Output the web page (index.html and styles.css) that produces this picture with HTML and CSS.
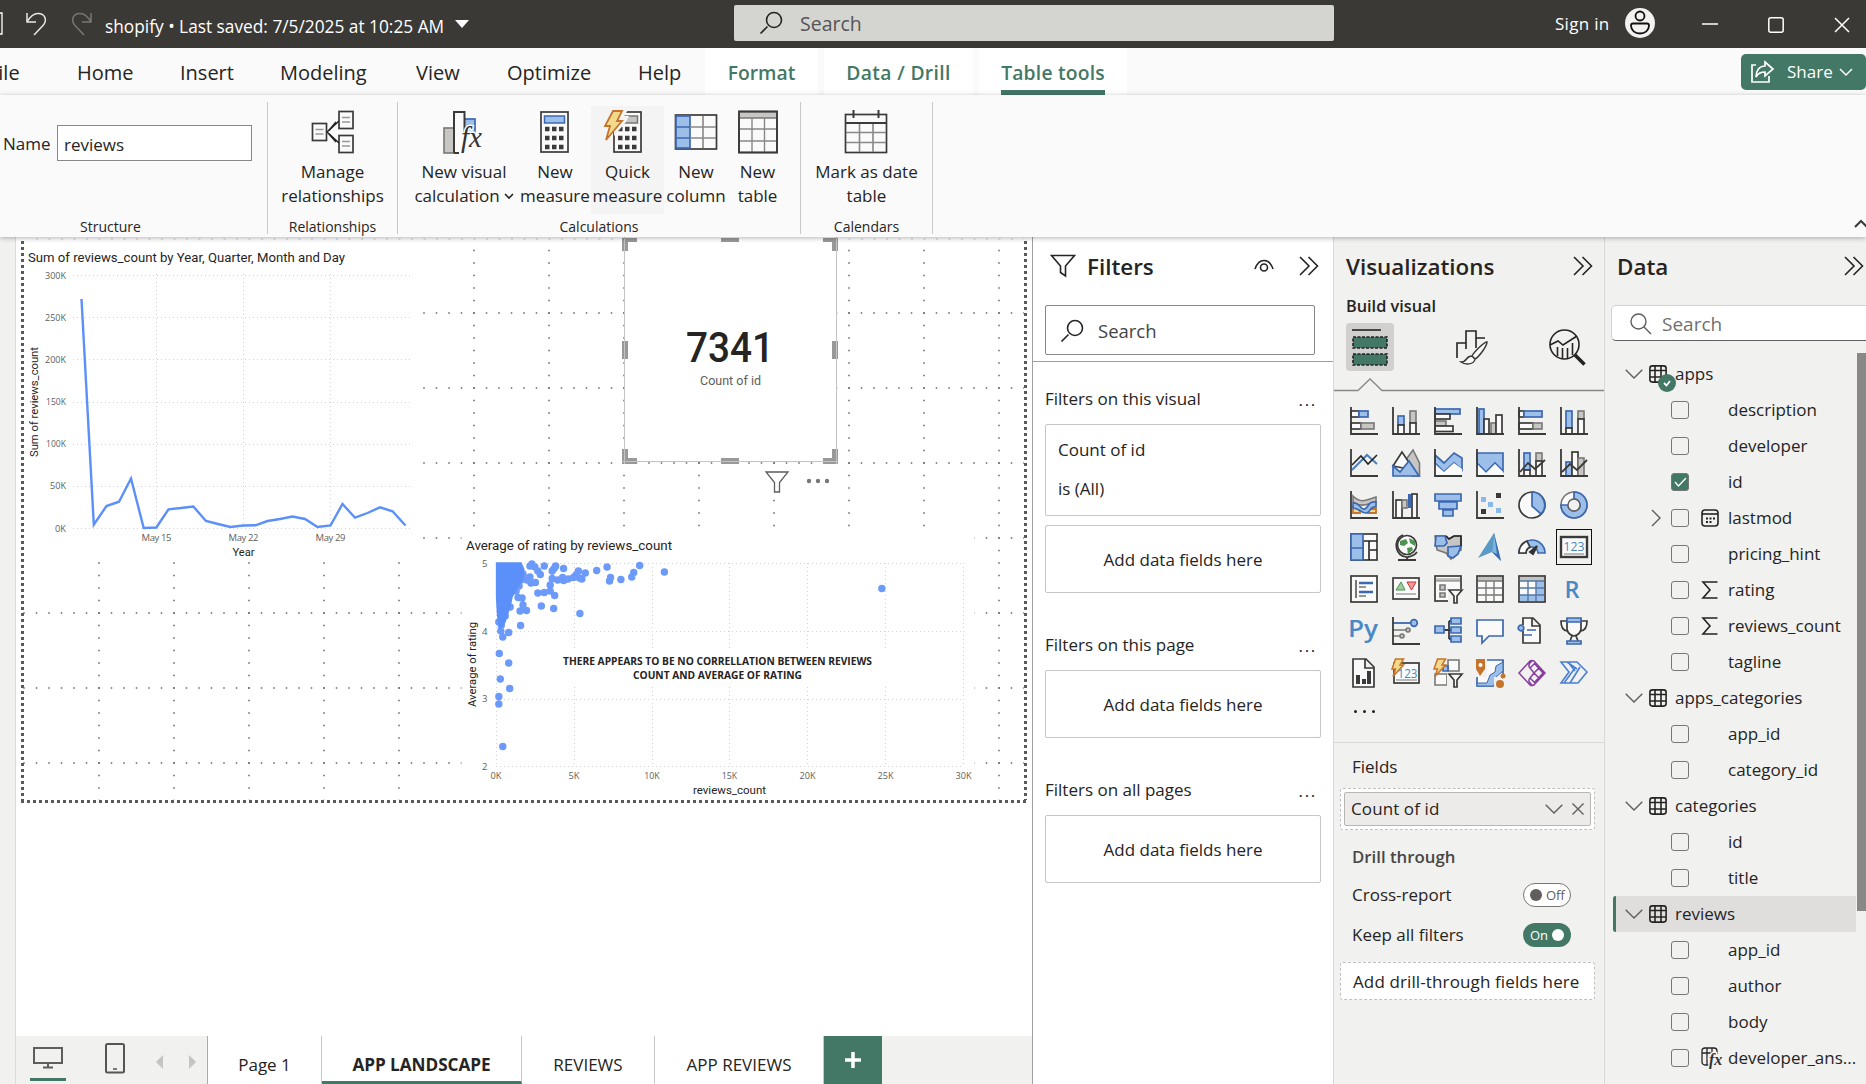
FILE: index.html
```html
<!DOCTYPE html>
<html lang="en">
<head>
<meta charset="utf-8">
<title>shopify</title>
<link rel="stylesheet" href="styles.css">
</head>
<body>
<svg class="defs" width="0" height="0">
  <defs>
    <symbol id="chev" viewBox="0 0 18 10"><path d="M.7.7 9 9 17.300.7" class="ln"/></symbol>
    <symbol id="dbl" viewBox="0 0 20 20"><path d="M1 1l9 9-9 9M9.500 1l9 9-9 9" class="ln dark"/></symbol>
    <symbol id="mag" viewBox="0 0 24 24"><path d="M8.500 15.500L1.500 22.500M15 1.500a7.500 7.500 0 1 1 0 15a7.500 7.500 0 1 1 0-15" class="ln d2"/></symbol>
    <symbol id="tbl" viewBox="0 0 18 18"><rect x=".9" y=".9" width="16.200" height="16.200" rx="2.500" class="ln d2"/><path d="M1 5.500h16M1 12h16M6 1v16M12 1v16" class="ln d2"/></symbol>
    <symbol id="sum" viewBox="0 0 18 18"><path d="M16.500 1H2l7 8-7 8h14.500" class="ln d2"/></symbol>
    <symbol id="funnel" viewBox="0 0 26 26"><path d="M1.500 2.500h23l-9 10.500v10l-5-3.500V13z" class="ln d2"/></symbol>
    <symbol id="bolt" viewBox="0 0 14 20"><path d="M5 1h8L9.500 7H13L2.500 18.500 5 11H1.500z" fill="#f3d98b" stroke="#c4742c" stroke-width="1.500"/></symbol>
    <symbol id="calc" viewBox="0 0 30 42"><rect x="1" y="1" width="27" height="40" class="w"/><rect x="4.500" y="5" width="20" height="7" class="top"/><path d="M5 18h4.500M12 18h4.500M19 18h4.500M5 27h4.500M12 27h4.500M19 27h4.500M5 36h4.500M12 36h4.500M19 36h4.500" stroke="#3b3a39" stroke-width="4.500"/></symbol>
  </defs>
</svg>

<header class="titlebar">
  <div class="tb-left">
    <svg class="save" width="3" height="24"><path d="M0 1h2v21H0" fill="none" stroke="#fff" stroke-width="1.300"/></svg>
    <svg class="undo" width="22" height="24" viewBox="0 0 22 24"><path d="M1 1v9h9M1 10C5 3 9 1 13 1.500c7 1 8 7.500 4 12L8 23" fill="none" stroke="#e8e8e8" stroke-width="1.500"/></svg>
    <svg class="redo" width="22" height="24" viewBox="0 0 22 24"><path d="M21 1v9h-9M21 10C17 3 13 1 9 1.500c-7 1-8 7.500-4 12L14 23" fill="none" stroke="#797775" stroke-width="1.500"/></svg>
    <span class="doc">shopify&nbsp;•&nbsp;Last saved: 7/5/2025 at 10:25 AM</span>
    <svg class="drop" width="14" height="8"><path d="M0 0h14L7 8z" fill="#fff"/></svg>
  </div>
  <div class="tb-search"><svg width="24" height="24"><use href="#mag"/></svg><span>Search</span></div>
  <div class="tb-right">
    <span class="signin">Sign in</span>
    <svg width="30" height="30" viewBox="0 0 30 30"><circle cx="15" cy="15" r="15" fill="#f3f2f1"/><circle cx="15" cy="8" r="4.500" fill="none" stroke="#111" stroke-width="1.800"/><path d="M8 15.500h14a2 2 0 0 1 2 2c0 5-4 8-9 8s-9-3-9-8a2 2 0 0 1 2-2z" fill="none" stroke="#111" stroke-width="1.800"/></svg>
    <svg class="min" width="16" height="16"><path d="M0 8h16" stroke="#fff" stroke-width="1.500"/></svg>
    <svg class="max" width="16" height="16"><rect x=".8" y=".8" width="14.400" height="14.400" rx="2" fill="none" stroke="#fff" stroke-width="1.500"/></svg>
    <svg class="cls" width="16" height="16"><path d="M1 1l14 14M15 1L1 15" stroke="#fff" stroke-width="1.500"/></svg>
  </div>
</header>

<nav class="tabs">
  <span class="tab t-file">File</span><span class="tab t-home">Home</span><span class="tab t-insert">Insert</span><span class="tab t-model">Modeling</span><span class="tab t-view">View</span><span class="tab t-opt">Optimize</span><span class="tab t-help">Help</span>
  <span class="ctx c-format">Format</span><span class="ctx c-data">Data / Drill</span><span class="ctx c-table"><b>Table tools</b></span>
  <button class="share"><svg width="24" height="24" viewBox="0 0 24 24"><path d="M5 5H1v17h17v-6M14 2l8 7-8 7v-4c-4 0-7 1-9 5 0-6 3-11 9-11z" fill="none" stroke="#fff" stroke-width="1.700"/></svg>Share<svg width="14" height="9"><path d="M1 1l6 6 6-6" fill="none" stroke="#fff" stroke-width="1.500"/></svg></button>
</nav>

<section class="ribbon">
  <div class="group g-structure">
    <div class="tools name"><label>Name</label><div class="input">reviews</div></div>
    <div class="caption">Structure</div>
  </div>
  <div class="group g-rel">
    <div class="tools"><div class="tool">
      <svg width="44" height="44" viewBox="0 0 44 44"><path d="M18 20.500L25 12M18 24l7 8" class="ln d2"/><rect x="1.500" y="13.500" width="14" height="17" class="w"/><rect x="22" y="1.500" width="14" height="17" class="w" transform="translate(6)"/><rect x="28" y="25.500" width="14" height="17" class="w"/><path d="M4.500 19.500h8M4.500 24h8M31 7.500h8M31 12h8M31 31.500h8M31 36h8" stroke="#999" stroke-width="1.500"/><path d="M16 22l12-11M16 22l12 11" class="ln d2"/></svg>
      <span>Manage<br>relationships</span></div></div>
    <div class="caption">Relationships</div>
  </div>
  <div class="group g-calc">
    <div class="tools">
      <div class="tool w-visual"><svg width="44" height="44" viewBox="0 0 44 44"><rect x="2" y="18" width="10" height="25" class="g"/><rect x="22" y="9" width="11" height="15" class="b"/><path d="M12 43V2h10.500v24M12 43h5" fill="#fafafa" stroke="#3b3a39" stroke-width="2"/><text x="19" y="37" class="fx" font-size="29">fx</text></svg><span>New visual<br>calculation<svg class="tiny" width="10" height="7"><path d="M1 1l4 4 4-4" class="ln d2"/></svg></span></div>
      <div class="tool w-measure"><svg class="blue" width="30" height="42"><use href="#calc"/></svg><span>New<br>measure</span></div>
      <div class="tool w-quick"><svg class="grey" width="44" height="44" viewBox="0 0 44 44"><use href="#calc" x="10" y="1" width="30" height="42"/><path d="M9 0h16l-4 6h5l-3 6-12 14V0" fill="#f4f4f4"/><path d="M10 1h9l-5 10h5L3 30l4-14H2z" fill="#f3d98b" stroke="#c4742c" stroke-width="1.800"/></svg><span>Quick<br>measure</span></div>
      <div class="tool w-column"><svg width="44" height="42" viewBox="0 0 44 42"><rect x="1.500" y="4" width="41" height="34" class="w"/><rect x="2" y="5" width="14" height="32" class="b"/><path d="M2 16h14M2 27h14" stroke="#3c68b0" stroke-width="1.600"/><path d="M16 16h26M16 27h26M29 5v32" stroke="#8a8886" stroke-width="1.600"/></svg><span>New<br>column</span></div>
      <div class="tool w-table"><svg width="44" height="44" viewBox="0 0 44 44"><rect x="3" y="1.500" width="38" height="41" class="w"/><path d="M3 2h38v6H3z" class="g"/><path d="M4 19h36M4 31h36M16 8v34M28.500 8v34" stroke="#8a8886" stroke-width="1.400"/><rect x="3" y="1.500" width="38" height="41" class="ln d3"/></svg><span>New<br>table</span></div>
    </div>
    <div class="caption">Calculations</div>
  </div>
  <div class="group g-cal">
    <div class="tools"><div class="tool">
      <svg width="44" height="44" viewBox="0 0 44 44"><rect x="1.500" y="4.500" width="41" height="38" class="w"/><path d="M2 22.500h40M2 32.500h40M15.500 14v28M29 14v28" stroke="#8a8886" stroke-width="1.600"/><path d="M1 13h42M9.500 0v8M34.500 0v8" stroke="#3b3a39" stroke-width="2"/></svg>
      <span>Mark as date<br>table</span></div></div>
    <div class="caption">Calendars</div>
  </div>
  <svg class="collapse" width="14" height="9"><path d="M1 8l6-6 6 6" fill="none" stroke="#3b3a39" stroke-width="2"/></svg>
</section>

<main class="work">
  <div class="rail"></div>
  <section class="center">
    <svg class="canvas" viewBox="16 237 1016 799" width="1016" height="799">
      <g stroke="#666" stroke-width="1.500" stroke-dasharray="1.500 11">
        <path d="M23.250 613H1024M23.250 688H1024M23.250 763H1024M423.250 313H1024M423.250 388H1024M423.250 463H1024M423.250 538H1024"/>
        <path d="M99 562.250V800M174 562.250V800M249 562.250V800M324 562.250V800M399 562.250V800M474 249.750V530M549 249.750V530M624 249.750V530M699 462.250V530M774 462.250V530M849 249.750V530M924 249.750V530M999 249.750V800"/>
      </g>
      <path d="M36 239H1024" stroke="#c8c8c8" stroke-dasharray="2 10.500"/>
      <path d="M22.500 241V800M1025.500 241V800M21 801.500H1027" stroke="#5a5a5a" stroke-width="3" stroke-dasharray="3 3"/>
      <rect x="461.500" y="530" width="513" height="269" fill="#fff"/>
      <rect x="25" y="242" width="396" height="318" fill="#fff"/>

      <g class="grid">
        <path d="M73 275.500H411M73 317.500H411M73 359.500H411M73 402.500H411M73 444.500H411M73 486.500H411M73 528.500H411M156.500 274V528M243.500 274V528M330.500 274V528"/>
        <path d="M496 563.500H964M496 631.500H964M496 699.500H964M496 766.500H964M496.500 563V767M574.500 563V767M652.500 563V767M729.500 563V767M807.500 563V767M885.500 563V767M963.500 563V767"/>
      </g>
      <text class="din" x="28" y="262" font-size="13.500" textLength="317" lengthAdjust="spacingAndGlyphs">Sum of reviews_count by Year, Quarter, Month and Day</text>
      <g class="tick" text-anchor="end">
        <text x="66" y="279" textLength="21" lengthAdjust="spacingAndGlyphs">300K</text><text x="66" y="321" textLength="21" lengthAdjust="spacingAndGlyphs">250K</text><text x="66" y="363" textLength="21" lengthAdjust="spacingAndGlyphs">200K</text><text x="66" y="405" textLength="20" lengthAdjust="spacingAndGlyphs">150K</text><text x="66" y="447" textLength="20" lengthAdjust="spacingAndGlyphs">100K</text><text x="66" y="489" textLength="16" lengthAdjust="spacingAndGlyphs">50K</text><text x="66" y="532" textLength="11" lengthAdjust="spacingAndGlyphs">0K</text>
        <text x="487.500" y="567">5</text><text x="487.500" y="635">4</text><text x="487.500" y="702">3</text><text x="487.500" y="770">2</text>
      </g>
      <g class="tick" text-anchor="middle">
        <text x="156.500" y="541" textLength="30">May 15</text><text x="243.500" y="541" textLength="30">May 22</text><text x="330.500" y="541" textLength="30">May 29</text>
        <text x="496" y="779" textLength="11" lengthAdjust="spacingAndGlyphs">0K</text><text x="574" y="779" textLength="11" lengthAdjust="spacingAndGlyphs">5K</text><text x="652" y="779" textLength="15.500" lengthAdjust="spacingAndGlyphs">10K</text><text x="729.500" y="779" textLength="15.500" lengthAdjust="spacingAndGlyphs">15K</text><text x="807.500" y="779" textLength="16" lengthAdjust="spacingAndGlyphs">20K</text><text x="885.500" y="779" textLength="16" lengthAdjust="spacingAndGlyphs">25K</text><text x="963.500" y="779" textLength="16" lengthAdjust="spacingAndGlyphs">30K</text>
      </g>
      <g class="din" text-anchor="middle" font-size="11.500">
        <text x="243.500" y="556" textLength="22" lengthAdjust="spacingAndGlyphs">Year</text>
        <text x="729.500" y="794" textLength="73" lengthAdjust="spacingAndGlyphs">reviews_count</text>
        <text transform="translate(38 402) rotate(-90)" textLength="110" lengthAdjust="spacingAndGlyphs">Sum of reviews_count</text>
        <text transform="translate(475.500 664.500) rotate(-90)" textLength="85" lengthAdjust="spacingAndGlyphs">Average of rating</text>
      </g>
      <polyline points="81.500,299 93.800,524.700 106.500,506 119,501.700 131,478.500 143.700,528 156.300,527.500 168.500,509.300 181,508 193.300,506.500 206,521 218,524 230.500,527 243,525.500 255.500,525.300 267.500,521 280,519 292.500,516.500 305,519 317.500,527 330.500,525.500 342.500,504 355,517.700 367.500,513 380,507.300 392.500,511.300 405.500,525.500" fill="none" stroke="#5b8ff9" stroke-width="2.400"/>
      <text class="din" x="466" y="550" font-size="13.500" textLength="206" lengthAdjust="spacingAndGlyphs">Average of rating by reviews_count</text>
      <g transform="translate(5.051 0) scale(.98852 1)">
        <path d="M496.500 562.300h26l3 7-1 10-6 9-5 9-2 10-3 8-2 7-4 6h-3l-2-13-1-18z" fill="#5b8ff9"/>
        <path class="pts" d="M531 566h0M528 580h0M533 564h0M536 567h0M539 571h0M541.500 574.500h0M531 577h0M532 583h0M536.500 582.500h0M545.500 566h0M556.500 567h0M557 566h0M555 569h0M553.500 571h0M565 568.500h0M580 571h0M587 573h0M598.500 570.500h0M609 567h0M642 565.500h0M636 572.500h0M634 577h0M667 572h0M887 588.500h0M612.500 577.500h0M611.500 581h0M623 579.500h0M553.500 578.500h0M559 580h0M564 577.500h0M565 580.500h0M569.500 579h0M575 577.500h0M577.500 575h0M581 578h0M583.500 579h0M551.500 585h0M551.500 591h0M556 595.500h0M539 593h0M545.500 592.500h0M523 598h0M519 597.500h0M517 591h0M524 605h0M521 611h0M527.500 610.500h0M542.500 606h0M555 608.500h0M581.500 613.500h0M521.500 625.500h0M509.500 632.500h0M503.500 637h0M500 653.500h0M509.500 663h0M501 679h0M510.500 688.500h0M499.500 696.500h0M499.500 704h0M503.500 746.500h0M511 607h0M506 616h0M502 625h0M501.500 631h0M499.500 622h0M522 580h0M520 586h0M524 574h0"/>
      </g>
      <rect x="538" y="650" width="358" height="37" fill="#fff"/>
      <g class="note" text-anchor="middle"><text x="717.500" y="665" textLength="309" lengthAdjust="spacingAndGlyphs">THERE APPEARS TO BE NO CORRELLATION BETWEEN REVIEWS</text><text x="717.500" y="679" textLength="169" lengthAdjust="spacingAndGlyphs">COUNT AND AVERAGE OF RATING</text></g>

      <rect x="624.500" y="236.500" width="212" height="225" fill="#fff" stroke="#c0c0c0"/>
      <path d="M622 238h15v4h-9v9h-6zM838 238h-15v4h9v9h6zM622 464h15v-6h-9v-9h-6zM838 464h-15v-6h9v-9h6zM721 238h18v4h-18zM721 458h18v6h-18zM622 341h6v18h-6zM832 341h6v18h-6z" fill="#999"/>
      <path d="M624.500 238V464M836.500 238V464M622 461.500h216" stroke="#c4c4c4"/>
      <text class="din big" x="686" y="362" font-size="42" textLength="88" lengthAdjust="spacingAndGlyphs">7341</text>
      <text class="din cnt" x="700" y="385" font-size="13.500" textLength="61" lengthAdjust="spacingAndGlyphs">Count of id</text>
      <rect x="764" y="470" width="68" height="24" fill="#fff"/>
      <path d="M766 472h22l-8.500 10.500V492h-5v-9.500z" fill="none" stroke="#605e5c" stroke-width="1.300"/>
      <g fill="#797775"><circle cx="809" cy="481" r="2.200"/><circle cx="818" cy="481" r="2.200"/><circle cx="827" cy="481" r="2.200"/></g>
    </svg>
    <footer class="pages">
      <div class="views">
        <div class="desk"><svg width="30" height="22"><path d="M1 1h28v15H1zM15 16v4M10 20.500h10" fill="none" stroke="#605e5c" stroke-width="2"/></svg></div>
        <svg class="phone" width="20" height="31"><rect x="1" y="1" width="18" height="28.500" rx="1.500" fill="none" stroke="#555" stroke-width="2"/><path d="M8 26h4" stroke="#555" stroke-width="1.500"/></svg>
        <svg class="prev" width="7" height="14"><path d="M7 0v14L0 7z" fill="#c4c4c4"/></svg>
        <svg class="next" width="7" height="14"><path d="M0 0v14l7-7z" fill="#c4c4c4"/></svg>
      </div>
      <span class="pg p1">Page 1</span><span class="pg p2">APP LANDSCAPE</span><span class="pg p3">REVIEWS</span><span class="pg p4">APP REVIEWS</span>
      <span class="add"><svg width="18" height="18"><path d="M9 1v16M1 9h16" stroke="#fff" stroke-width="3.500"/></svg></span>
    </footer>
  </section>

  <aside class="filters">
    <div class="f-head"><svg width="26" height="26"><use href="#funnel"/></svg><h2>Filters</h2>
      <svg class="eye" width="20" height="14"><path d="M1 10C3 4 6 1.500 10 1.500S17 4 19 10" class="ln d2"/><circle cx="10" cy="8.500" r="3.500" class="ln d2"/></svg>
      <svg width="20" height="20"><use href="#dbl"/></svg></div>
    <div class="f-search"><svg width="24" height="24"><use href="#mag"/></svg>Search</div>
    <div class="f-title t1"><span>Filters on this visual</span><i>...</i></div>
    <div class="f-card"><span>Count of id</span><span>is (All)</span></div>
    <div class="f-drop">Add data fields here</div>
    <div class="f-title t2"><span>Filters on this page</span><i>...</i></div>
    <div class="f-drop">Add data fields here</div>
    <div class="f-title t2"><span>Filters on all pages</span><i>...</i></div>
    <div class="f-drop">Add data fields here</div>
  </aside>

  <aside class="viz">
    <div class="v-head"><h2>Visualizations</h2><svg width="20" height="20"><use href="#dbl"/></svg></div>
    <h3>Build visual</h3>
    <div class="modes">
      <div class="mode on"><svg width="36" height="36" viewBox="0 0 36 36"><path d="M0 1h29" class="ln d2"/><g fill="#437866" stroke="#222" stroke-width="1.600" stroke-dasharray="3 1.500"><rect x="1" y="8" width="34" height="11"/><rect x="1" y="25" width="34" height="11"/></g></svg></div>
      <svg class="brush" width="34" height="36" viewBox="0 0 34 36"><path d="M2 29V14h9M11 20V2h10v17M21 9h9" class="ln d2"/><path d="M32 13c-3 0-13 10-15 14l3 3c4-2 12-13 12-17zM17 27c-7 0-4 6-11 6 4 3 13 3 14-3z" class="w thin"/></svg>
      <svg width="37" height="37" viewBox="0 0 37 37"><circle cx="15.500" cy="15.500" r="14.500" class="ln d2"/><path d="M1 16l8-4 5 4 14-9M8.500 18v9M13.500 19v11M18.500 19v11M23.500 14v12" class="ln d2"/><path d="M26 26l9.500 9.500" stroke="#222" stroke-width="3.500"/></svg>
    </div>
    <svg class="notch" width="270" height="14" viewBox="0 0 270 14"><path d="M0 12.500h24L36 1l12 11.500h222" fill="none" stroke="#8a8886" stroke-width="1.300"/></svg>
    <div class="gallery">
      <svg viewBox="0 0 28 28"><rect x="1" y="4" width="8" height="6" class="w"/><rect x="9" y="4" width="9" height="6" class="b"/><rect x="1" y="16" width="10" height="6" class="w"/><rect x="11" y="16" width="13" height="6" class="g"/><path d="M1 0v27h27" class="ax"/></svg>
      <svg viewBox="0 0 28 28"><rect x="6" y="9" width="6" height="9" class="b"/><rect x="6" y="18" width="6" height="9" class="w"/><rect x="18" y="4" width="6" height="12" class="g"/><rect x="18" y="16" width="6" height="11" class="w"/><path d="M1 0v27h27" class="ax"/></svg>
      <svg viewBox="0 0 28 28"><rect x="1" y="2" width="25" height="5" class="b"/><rect x="1" y="7" width="15" height="5" class="w"/><rect x="1" y="14" width="11" height="5" class="g"/><rect x="1" y="19" width="18" height="5.500" class="w"/><path d="M1 0v27h27" class="ax"/></svg>
      <svg viewBox="0 0 28 28"><rect x="3" y="2" width="5" height="25" class="b"/><rect x="8" y="12" width="5" height="15" class="w"/><rect x="15" y="16" width="5" height="11" class="g"/><rect x="20" y="8" width="6" height="19" class="w"/><path d="M1 0v27h27" class="ax"/></svg>
      <svg viewBox="0 0 28 28"><rect x="1" y="4" width="5" height="6" class="w"/><rect x="6" y="4" width="18" height="6" class="b"/><rect x="1" y="16" width="14" height="6" class="w"/><rect x="15" y="16" width="9" height="6" class="g"/><path d="M1 0v27h27" class="ax"/></svg>
      <svg viewBox="0 0 28 28"><rect x="6" y="4" width="6" height="17" class="b"/><rect x="6" y="21" width="6" height="6" class="w"/><rect x="18" y="4" width="6" height="8" class="g"/><rect x="18" y="12" width="6" height="15" class="w"/><path d="M1 0v27h27" class="ax"/></svg>

      <svg viewBox="0 0 28 28"><path d="M2 21L17 6l10 9" class="ln bl"/><path d="M2 16l9-9 7 8 9-9" class="ln d2"/><path d="M1 0v27h27" class="ax"/></svg>
      <svg viewBox="0 0 28 28"><path d="M13 12l8-11 6.500 13v13H20z" class="g"/><path d="M1 17L10 3l12 18z" class="w"/><path d="M1 17l7 6 9-11 10 15H1z" class="b"/></svg>
      <svg viewBox="0 0 28 28"><path d="M1 6l9 8 10-10 8 5v12l-8-7-10 9-9-9z" class="b"/><path d="M1 15l9 8 10-9 8 6v7H1z" fill="#fafafa"/><path d="M1 0v27h27" class="ax"/></svg>
      <svg viewBox="0 0 28 28"><path d="M1 4h26v18l-8-8-9 9-9-9z" class="b"/><path d="M2 16l8 8 9-9 8 8v3H2z" fill="#fafafa"/><path d="M1 0v27h27" class="ax"/></svg>
      <svg viewBox="0 0 28 28"><rect x="6" y="4" width="6" height="17" class="b"/><rect x="6" y="21" width="6" height="6" class="w"/><rect x="18" y="4" width="6" height="8" class="g"/><rect x="18" y="12" width="6" height="15" class="w"/><path d="M2 23l8-9 7 6 10-9M1 0v27h27" class="ax"/></svg>
      <svg viewBox="0 0 28 28"><rect x="6" y="13" width="6" height="14" class="b"/><rect x="12" y="3" width="6" height="24" class="w"/><rect x="18" y="9" width="6" height="18" class="g"/><path d="M2 23l8-8 7 6 10-10M1 0v27h27" class="ax"/></svg>

      <svg viewBox="0 0 28 28"><path d="M3 16h7v6H3zM18 18h8v4h-8z" fill="#f3d98b" stroke="#c4742c" stroke-width="1.800"/><path d="M3 5c8 8 14 4 23 1v5c-9 2-14 6-23 0z" class="g"/><path d="M3 12c8 0 8 8 12 6s3-8 11-7v5c-7-1-5 6-10 6S9 17 3 17z" class="b"/><path d="M1 0v27h27" class="ax"/></svg>
      <svg viewBox="0 0 28 28"><rect x="4" y="9" width="6" height="18" class="w"/><rect x="10" y="9" width="5" height="8" class="g"/><rect x="16" y="3" width="3" height="14" fill="#3c68b0"/><rect x="20" y="3" width="5" height="24" class="w"/><path d="M1 0v27h27" class="ax"/></svg>
      <svg viewBox="0 0 28 28"><path d="M1 3h26v7H1zM5 11h18v7H5zM9 19h10v6H9z" class="b"/></svg>
      <svg viewBox="0 0 28 28"><path d="M20 2h5v5h-5zM5 18h5v5H5z" fill="#3b3a39"/><path d="M5 6h5v5H5zM12 11h5v5h-5zM20 17h5v5h-5z" fill="#8ab8e8"/><path d="M1 0v27h27" class="ax"/></svg>
      <svg viewBox="0 0 28 28"><circle cx="14" cy="14" r="13" class="w"/><path d="M14 1a13 13 0 0 1 9 22l-9-8z" class="b"/></svg>
      <svg viewBox="0 0 28 28"><circle cx="14" cy="14" r="13" class="g wht"/><path d="M14 1A13 13 0 1 1 1 14h7a6 6 0 1 0 6-6z" class="b"/><circle cx="14" cy="14" r="6" fill="#f1f1ef" stroke="#605e5c" stroke-width="1.400"/></svg>

      <svg viewBox="0 0 28 28"><rect x="1" y="1" width="26" height="26" class="w"/><path d="M13 8h14M13 8v19M19 8v19M20 17h7" class="ln d2"/><path d="M1 1h12v26H1zM1 15h12" class="b"/></svg>
      <svg viewBox="0 0 28 28"><path d="M11 2C0 6 3 25 16 24q6-1 9-5M15 25v2M6 27h18" class="ax"/><circle cx="15" cy="12" r="9.500" class="w"/><path d="M8 8l6-2 2 4-4 3-4-1zM17 5l6 3v5l-5-3zM15 15l5-1 1 3-5 4z" fill="#4c9450"/></svg>
      <svg viewBox="0 0 28 28"><path d="M1 3h11l3 3 5-3h7v14l-7 4-3 5-5-6-9-3z" class="g"/><path d="M2 3h9l2 7-3 3H1zM14 14l13-1-3 8-5 4-5-2z" class="b"/><path d="M12 3l3 3 5-3h7v10" class="ln d2"/></svg>
      <svg viewBox="0 0 28 28"><path d="M18 0L2 25l14-6 9 9z" fill="#5c9ac6"/><path d="M18 0l7 28-9-9z" fill="#3c68b0"/><path d="M18 0l3 21-5-2z" fill="#79b5dc"/></svg>
      <svg viewBox="0 0 28 28"><path d="M1 20a13 13 0 0 1 26 0h-7a6 6 0 0 0-12 0z" class="b"/><path d="M1 20a13 13 0 0 1 8-12l3 6q-4 2-4 6z" class="w"/><path d="M12 19l7-6-4 8z" fill="#333" stroke="#333" stroke-width="2"/></svg>
      <svg class="sel" viewBox="0 0 28 28"><rect x="1" y="4" width="26" height="20" class="w heavy"/><path d="M4 21h20" stroke="#797775"/><text x="3.500" y="18" textLength="21" lengthAdjust="spacingAndGlyphs" font-size="13" fill="#4a88c6">123</text></svg>

      <svg viewBox="0 0 28 28"><rect x="1" y="1" width="26" height="26" class="w"/><path d="M6 5v18" stroke="#797775" stroke-width="2"/><path d="M9 8h14M9 17h14" stroke="#3c68b0" stroke-width="2.500"/><path d="M9 12h7M9 21h7" stroke="#797775" stroke-width="1.500"/></svg>
      <svg viewBox="0 0 28 28"><rect x="1" y="3" width="26" height="21" class="w"/><path d="M4 15l5-8 4 8z" fill="#9ccf9c" stroke="#4c9450"/><path d="M15 7h9l-4.500 8z" fill="#f09a9a" stroke="#c33"/><path d="M4 19h20" stroke="#797775"/></svg>
      <svg viewBox="0 0 28 28"><rect x="1" y="1" width="26" height="25" class="w"/><path d="M2 3h24v3H2z" fill="#c0c4be"/><path d="M2 6h24" stroke="#797775"/><path d="M6 10h5v5H6zM6 18h5v4H6z" class="g"/><path d="M14 14h15v15H14z" fill="#f1f1ef"/><path d="M15 15h13l-5 6v7h-3v-7z" class="w"/></svg>
      <svg viewBox="0 0 28 28"><rect x="1" y="1" width="26" height="26" class="w"/><path d="M2 2h24v4H2z" fill="#c0c4be"/><path d="M2 6h24M2 13h24M2 20h24M10 6v20M18 6v20" stroke="#797775" stroke-width="1.400"/></svg>
      <svg viewBox="0 0 28 28"><rect x="1" y="1" width="26" height="26" class="w"/><path d="M2 2h24v4H2z" fill="#c0c4be"/><path d="M18 6h8v20H2v-6h16z" fill="#9bbfe9"/><path d="M2 6h24M2 13h24M2 20h24M10 6v20M18 6v20" stroke="#5577a8" stroke-width="1.400"/></svg>
      <svg viewBox="0 0 28 28"><text x="4.500" y="23" class="lg" textLength="15" lengthAdjust="spacingAndGlyphs">R</text></svg>

      <svg viewBox="0 0 28 28"><text x="-2" y="20" class="lg" textLength="30" lengthAdjust="spacingAndGlyphs">Py</text></svg>
      <svg viewBox="0 0 28 28"><path d="M1 6h20" stroke="#3c68b0" stroke-width="1.800"/><path d="M1 13h14M1 19h8" stroke="#797775" stroke-width="1.500"/><circle cx="22" cy="6" r="3.300" class="b"/><circle cx="16" cy="13" r="2" class="g"/><circle cx="10" cy="19" r="2" class="g"/><path d="M1 0v27h27" class="ax"/></svg>
      <svg viewBox="0 0 28 28"><path d="M10 13h7M15 4v18M15 4h3M15 22h3" class="ax"/><path d="M1 9h9v7H1zM17 1h10v6H17zM17 10h10v6H17zM17 19h10v6H17z" class="b"/></svg>
      <svg viewBox="0 0 28 28"><path d="M1 3h26v16H13l-7 7v-7H1z" class="b wht"/></svg>
      <svg viewBox="0 0 28 28"><path d="M5 8V1h10l7 7v18H5V14M14 1v8h8" class="w"/><circle cx="3" cy="11" r="2.800" class="b"/><path d="M9 13h9M6 18h8" stroke="#3c68b0" stroke-width="1.400"/></svg>
      <svg viewBox="0 0 28 28"><path d="M7 3h14v9q-1 6-7 7-6-1-7-7zM7 4H1q0 9 6 10M21 4h6q0 9-6 10M12 19l-2 5M16 19l2 5" class="w"/><path d="M7 1h14v4H7zM7 24h14v3H7z" class="b"/></svg>

      <svg viewBox="0 0 28 28"><path d="M3 0h13l8 8v20H3zM15 0v9h9" class="w"/><path d="M8 16v9M14 20v5M19 12v13" stroke="#3b3a39" stroke-width="4"/></svg>
      <svg viewBox="0 0 28 28"><rect x="2" y="4" width="25" height="20" class="w"/><path d="M4 21h21" stroke="#797775"/><text x="5.500" y="19" font-size="13" textLength="20" lengthAdjust="spacingAndGlyphs" fill="#4a88c6">123</text><use href="#bolt" x="-2" y="-1" width="15" height="20"/></svg>
      <svg viewBox="0 0 28 28"><path d="M14 1h11v11H14zM1 15h12v11H1z" class="g wht"/><path d="M13 14h16v16H13z" fill="#f1f1ef"/><path d="M15 15h13l-5 6v7h-3v-7z" class="w"/><path d="M9 7h5v5H9z" class="b"/><use href="#bolt" x="-2" y="-1" width="15" height="20"/></svg>
      <svg viewBox="0 0 28 28"><path d="M1 1h26v26H1z" class="b wht"/><path d="M27 1v11l-8 7-1 8H1v-3h10l3-8 5-3 1-6 7-4" fill="#9bbfe9" stroke="#3c68b0"/><path d="M-1-1h12v19H-1z" fill="#f1f1ef"/><path d="M0 0h9v10l-5 7-4-7z" fill="#c4742c"/><circle cx="4.500" cy="6" r="2" fill="#fff"/><path d="M18 18h12v12H18z" fill="#f1f1ef"/><circle cx="24" cy="25" r="4" fill="#c4742c"/><circle cx="27" cy="17" r="2.500" fill="#c4742c"/></svg>
      <svg viewBox="0 0 28 28"><path d="M12 2L1 14l11 12q2 1 4 0l11-12L16 2q-2-1-4 0zM14 2q-5 4-2 7l4 5-4 5q-3 3 2 7M16 14l6-6M12 9l5-5M16 14l6 6M12 19l5 5M16 4l9 10-9 10" fill="none" stroke="#8a3fa0" stroke-width="1.500"/></svg>
      <svg viewBox="0 0 28 28"><path d="M1 3h16l10 10-9 11H1l8-11zM8 3l7 9M15 9L4 24M20 8L10 24M7 3l10 7" fill="none" stroke="#4a7fd6" stroke-width="1.600"/></svg>
    </div>
    <div class="more"><i></i><i></i><i></i></div>
    <div class="v-fields">
      <div class="lbl">Fields</div>
      <div class="well"><div class="pill"><span>Count of id</span><svg width="18" height="10"><use href="#chev"/></svg><svg width="12" height="12"><path d="M.5.5l11 11M11.500.5l-11 11" class="ln"/></svg></div></div>
      <div class="lbl drill">Drill through</div>
      <div class="opt"><span>Cross-report</span><span class="tog off"><i></i>Off</span></div>
      <div class="opt"><span>Keep all filters</span><span class="tog on">On<i></i></span></div>
      <div class="addwell">Add drill-through fields here</div>
    </div>
  </aside>

  <aside class="data">
    <div class="d-head"><h2>Data</h2><svg width="20" height="20"><use href="#dbl"/></svg></div>
    <div class="d-search"><svg width="22" height="22" viewBox="0 0 22 22"><circle cx="8.500" cy="8.500" r="7.500" class="ln"/><path d="M14 14l7 7" class="ln"/></svg>Search</div>
    <div class="tree">
      <div class="row top"><svg class="ch" width="18" height="10"><use href="#chev"/></svg><span class="badged"><svg width="18" height="18"><use href="#tbl"/></svg><svg class="badge" width="18" height="18"><circle cx="9" cy="9" r="9" fill="#437866"/><path d="M6 9l2.500 2.500L12 7" fill="none" stroke="#fff" stroke-width="1.800"/></svg></span><span>apps</span></div>
      <div class="row"><i class="cb"></i><b></b><span>description</span></div>
      <div class="row"><i class="cb"></i><b></b><span>developer</span></div>
      <div class="row"><i class="cb on"><svg width="16" height="16"><path d="M3 8l3.500 4L14 4" fill="none" stroke="#fff" stroke-width="1.400"/></svg></i><b></b><span>id</span></div>
      <div class="row exp"><svg class="arrow" width="10" height="18"><path d="M1 1l8 8-8 8" class="ln"/></svg><i class="cb"></i><b><svg width="18" height="18"><rect x="1" y="1" width="16" height="16" rx="3" class="ln d2"/><path d="M1 5h16" class="ln d2"/><path d="M5 9.500h2M8.500 9.500h2M12 9.500h2M5 13h2M8.500 13h2" stroke="#222" stroke-width="1.800"/></svg></b><span>lastmod</span></div>
      <div class="row"><i class="cb"></i><b></b><span>pricing_hint</span></div>
      <div class="row"><i class="cb"></i><b><svg width="18" height="18"><use href="#sum"/></svg></b><span>rating</span></div>
      <div class="row"><i class="cb"></i><b><svg width="18" height="18"><use href="#sum"/></svg></b><span>reviews_count</span></div>
      <div class="row"><i class="cb"></i><b></b><span>tagline</span></div>
      <div class="row top"><svg class="ch" width="18" height="10"><use href="#chev"/></svg><svg width="18" height="18"><use href="#tbl"/></svg><span>apps_categories</span></div>
      <div class="row"><i class="cb"></i><b></b><span>app_id</span></div>
      <div class="row"><i class="cb"></i><b></b><span>category_id</span></div>
      <div class="row top"><svg class="ch" width="18" height="10"><use href="#chev"/></svg><svg width="18" height="18"><use href="#tbl"/></svg><span>categories</span></div>
      <div class="row"><i class="cb"></i><b></b><span>id</span></div>
      <div class="row"><i class="cb"></i><b></b><span>title</span></div>
      <div class="row top selected"><svg class="ch" width="18" height="10"><use href="#chev"/></svg><svg width="18" height="18"><use href="#tbl"/></svg><span>reviews</span></div>
      <div class="row"><i class="cb"></i><b></b><span>app_id</span></div>
      <div class="row"><i class="cb"></i><b></b><span>author</span></div>
      <div class="row"><i class="cb"></i><b></b><span>body</span></div>
      <div class="row"><i class="cb"></i><b><svg width="22" height="22" viewBox="0 0 22 22"><path d="M8 18H4a3 3 0 0 1-3-3V4a3 3 0 0 1 3-3h9a3 3 0 0 1 3 3v3M1 6h15M6 1v17M11 1v6" class="ln thinln"/><text x="8" y="18" class="fx sm" font-size="16">fx</text></svg></b><span>developer_ans...</span></div>
      <div class="scroll"></div>
    </div>
  </aside>
</main>
</body>
</html>
```
FILE: styles.css
```css
* { box-sizing: border-box; }
body { margin: 0; width: 1866px; height: 1084px; overflow: hidden; background: #fff; color: #252423; font: 17px/24px "Open Sans", "Noto Sans", sans-serif; display: flex; flex-direction: column; }
svg { display: block; flex: none; overflow: visible; }
.defs { position: absolute; }
h2 { margin: 0; padding-top: 2px; font-size: 22.400px; line-height: 30px; font-weight: 600; }
h3 { margin: 0; font-size: 16.300px; line-height: 24px; font-weight: 600; }
i { font-style: normal; }

.ln { fill: none; stroke: #605e5c; stroke-width: 1.400; }
.ln.dark { stroke: #252423; stroke-width: 1.600; }
.ln.d2 { stroke: #252423; stroke-width: 1.600; }
.ln.d3 { stroke: #3b3a39; stroke-width: 1.700; }
.ln.thinln { stroke: #252423; stroke-width: 1.300; }
.ln.bl { stroke: #4a80bc; stroke-width: 2; }
.ax { fill: none; stroke: #3b3a39; stroke-width: 1.800; }
.w { fill: #fafafa; stroke: #3b3a39; stroke-width: 1.700; }
.w.thin { stroke-width: 1.500; }
.w.heavy { stroke-width: 2.400; }
.b { fill: #9bbfe9; stroke: #3c68b0; stroke-width: 1.700; }
.g { fill: #c8c6c4; stroke: #797775; stroke-width: 1.600; }
.wht { fill: #fafafa; }
.fx { font-family: "Liberation Serif", serif; font-style: italic; fill: #333; stroke: #fafafa; stroke-width: 3px; paint-order: stroke; }
.fx.sm { stroke: #f1f1ef; font-weight: 700; }
.blue { --t: #9bbfe9; --s: #3c68b0; }
.grey { --t: #c8c6c4; --s: #797775; }
.top { fill: var(--t); stroke: var(--s); stroke-width: 1.500; }

/* Title bar */
.titlebar { height: 48px; flex: none; background: #3b3936; color: #fff; display: flex; align-items: center; }
.tb-left { width: 734px; display: flex; align-items: center; }
.undo { margin: 0 0 0 23px; }
.redo { margin-left: 22px; }
.doc { margin: 5px 0 0 13px; white-space: nowrap; width: 341px; font-size: 17.300px; }
.drop { margin-left: 9px; }
.tb-search { width: 600px; height: 36px; margin-top: -2px; border-radius: 2px; background: #d4d4d1; color: #555; font-size: 19.500px; display: flex; align-items: center; padding-left: 25px; gap: 17px; }
.tb-search span { padding-top: 2px; }
.tb-right { flex: 1; display: flex; align-items: center; padding-left: 221px; }
.signin { width: 54px; margin-right: 16px; white-space: nowrap; letter-spacing: .3px; }
.signin + svg { margin-top: -2px; }
.min { margin-left: 47px; }
.max { margin-left: 50px; margin-top: 2px; }
.cls { margin-left: 50px; margin-top: 2px; }

/* Ribbon tabs */
.tabs { height: 47px; flex: none; background: #fafafa; display: flex; font-size: 20px; line-height: 50px; }
.tab { white-space: nowrap; flex: none; }
.t-file { width: 89px; margin-left: -12px; }
.t-home { width: 103px; }
.t-insert { width: 100px; }
.t-model { width: 136px; }
.t-view { width: 91px; }
.t-opt { width: 131px; }
.t-help { width: 67px; }
.ctx { background: #fff; color: #437866; font-weight: 600; font-size: 19.300px; text-align: center; white-space: nowrap; flex: none; }
.c-format { width: 113px; }
.c-data { width: 149px; margin-left: 6px; letter-spacing: .35px; }
.c-table { width: 148px; margin-left: 6px; }
.c-table b { display: inline-block; height: 47px; font-weight: 600; border-bottom: 5px solid #437866; letter-spacing: .2px; }
.share { margin: 6px 0 0 614px; width: 125px; height: 36px; border: 0; border-radius: 5px; background: #437866; color: #fff; font: 17px/36px "Open Sans", sans-serif; display: flex; align-items: center; padding: 0 0 0 10px; gap: 12px; flex: none; }
.share svg:last-child { margin-left: -6px; }

/* Ribbon body */
.ribbon { height: 142px; flex: none; background: #fafafa; display: flex; padding-top: 7px; box-shadow: 0 1px 5px rgba(0,0,0,.3); position: relative; z-index: 2; }
.group { height: 132px; flex: none; border-right: 1px solid #c8c8c8; display: flex; flex-direction: column; justify-content: space-between; align-items: center; }
.g-structure { width: 268px; }
.g-rel { width: 130px; }
.g-calc { width: 403px; }
.g-cal { width: 132px; }
.tools { display: flex; }
.tool { display: flex; flex: none; flex-direction: column; align-items: center; text-align: center; padding-top: 8px; height: 112px; white-space: nowrap; }
.tool > svg { height: 44px; }
.tool > span { margin-top: 6px; }
.tool > span svg { display: inline-block; }
.tiny { margin: 0 0 2px 4px; }
.w-visual { width: 110px; }
.w-measure { width: 72px; }
.w-quick { width: 73px; background: #f4f4f4; height: 108px; margin-top: 4px; padding-top: 4px; }
.w-quick > svg { margin-right: 6px; }
.w-column { width: 64px; }
.w-table { width: 59px; }
.g-calc .tools { align-self: flex-start; margin-left: 11px; }
.name { align-self: stretch; padding: 23px 0 0 3px; align-items: center; }
.name label { width: 54px; margin-top: 2px; }
.input { width: 195px; height: 36px; border: 1px solid #8a8886; background: #fff; line-height: 38px; padding-left: 6px; }
.caption { font-size: 14px; line-height: 14px; }
.g-structure .caption { align-self: flex-start; padding-left: 80px; }
.collapse { margin: 117px 0 0 921px; }

/* Workspace */
.work { flex: 1; display: flex; min-height: 0; }
.rail { width: 16px; background: #f1f1ef; border-right: 1px solid #dcdcdc; }
.center { width: 1017px; border-right: 1px solid #a0a0a0; display: flex; flex-direction: column; }
.canvas { overflow: hidden; }
.grid { stroke: #d4d4d4; stroke-width: 1; stroke-dasharray: 1 3; }
.din { font-family: Roboto, sans-serif; fill: #252423; }
.din.big { font-weight: 500; }
.din.cnt { fill: #605e5c; }
.tick { font-size: 9.500px; fill: #605e5c; }
.pts { fill: none; stroke: #5b8ff9; stroke-width: 7.500; stroke-linecap: round; opacity: .9; }
.note { font-size: 10.500px; font-weight: 700; fill: #252423; }

.pages { height: 48px; background: #f1f1ef; display: flex; line-height: 57px; }
.views { width: 192px; display: flex; padding-left: 14px; border-right: 1px solid #aaa; }
.desk { width: 36px; height: 45px; border-bottom: 3px solid #437866; padding: 11px 0 0 3px; }
.phone { margin: 7px 0 0 39px; }
.prev { margin: 19px 0 0 31px; }
.next { margin: 19px 0 0 26px; }
.pg { background: #fff; text-align: center; border-right: 1px solid #c8c8c8; white-space: nowrap; }
.p1 { width: 114px; }
.p2 { width: 200px; font-weight: 700; font-size: 17.200px; letter-spacing: -.05px; border-bottom: 3px solid #437866; }
.p3 { width: 133px; }
.p4 { width: 169px; }
.add { width: 58px; background: #437866; display: flex; align-items: center; justify-content: center; }

/* Filters pane */
.filters { width: 300px; padding: 14px 12px 0; }
.f-head { display: flex; align-items: center; height: 30px; padding: 0 2px 0 5px; }
.f-head h2 { margin-left: 11px; flex: 1; }
.eye { margin-right: 25px; }
.f-search { margin-top: 24px; width: 270px; height: 50px; border: 1px solid #8a8886; border-radius: 2px; display: flex; align-items: center; gap: 14px; padding: 1px 0 0 14px; font-size: 18.500px; color: #444; }
.f-title { display: flex; justify-content: space-between; height: 24px; white-space: nowrap; width: 271px; }
.f-title i { letter-spacing: 1.700px; line-height: 26px; margin-right: -1px; }
.f-title.t1 { margin: 6px -12px 12px; padding: 25px 0 0 12px; width: 300px; height: 51px; border-top: 1px solid #a19f9d; padding-right: 17px; }
.f-title.t2 { margin: 40px 0 13px; }
.f-card, .f-drop { width: 276px; border: 1px solid #c8c6c4; border-radius: 2px; }
.f-card { height: 92px; padding: 13px 12px; display: flex; flex-direction: column; gap: 15px; }
.f-drop { height: 68px; text-align: center; line-height: 67px; }
.f-card + .f-drop { margin-top: 9px; }

/* Visualizations pane */
.viz { width: 271px; background: #f1f1ef; border-left: 1px solid #d8d8d6; padding-top: 14px; }
.v-head { display: flex; height: 30px; justify-content: space-between; align-items: center; padding: 0 11px 0 12px; }
.viz h3 { margin: 13px 0 0 12px; }
.modes { display: flex; justify-content: space-between; align-items: center; height: 48px; margin-top: 5px; padding: 0 18px 0 12px; }
.mode { width: 48px; height: 48px; border-radius: 4px; background: #d2d0ce; padding: 6px; }
.notch { margin-top: 7px; }
.gallery { display: grid; grid-template-columns: repeat(6, 28px); gap: 14px; padding: 15px 0 0 16px; }
.gallery svg { width: 28px; height: 28px; }
.sel { outline: 1px solid #111; outline-offset: 3px; }
.lg { font-size: 24px; font-weight: 600; fill: #4a88c6; }
.more { display: flex; gap: 6px; padding: 23px 0 0 20px; }
.more i { width: 3px; height: 3px; border-radius: 50%; background: #252423; }
.v-fields { margin-top: 29px; border-top: 1px solid #d8d8d6; padding: 12px 9px 0 6px; white-space: nowrap; }
.lbl { padding-left: 12px; height: 24px; }
.well { margin-top: 9px; border: 1px dashed #c0c0c0; border-radius: 3px; background: #fff; padding: 3px; }
.pill { height: 34px; background: #edebe9; border: 1px solid #b8b6b4; border-radius: 2px; display: flex; align-items: center; padding: 0 6px; gap: 9px; }
.pill span { flex: 1; letter-spacing: .1px; }
.drill { margin-top: 15px; font-weight: 600; font-size: 16.800px; color: #484644; }
.opt { display: flex; justify-content: space-between; align-items: center; height: 24px; margin-top: 14px; padding: 0 24px 0 12px; }
.opt + .opt { margin-top: 16px; }
.tog { width: 48px; height: 24px; border-radius: 12px; font-size: 13px; line-height: 24px; display: flex; align-items: center; padding: 0 6px; gap: 4px; }
.tog i { width: 12px; height: 12px; border-radius: 50%; flex: none; }
.tog.off { background: #fff; border: 1px solid #797775; color: #605e5c; }
.tog.off i { background: #605e5c; }
.tog.on { background: #437866; color: #fff; padding-left: 7px; }
.tog.on i { background: #fff; }
.addwell { margin-top: 15px; height: 38px; border: 1px dashed #c0c0c0; border-radius: 3px; background: #fff; line-height: 37px; padding-left: 12px; letter-spacing: .12px; }

/* Data pane */
.data { width: 262px; background: #f1f1ef; border-left: 1px solid #d8d8d6; padding-top: 14px; }
.d-head { display: flex; height: 30px; justify-content: space-between; align-items: center; padding: 0 2px 0 12px; }
.d-search { margin: 24px 0 0 6px; height: 36px; width: 262px; border: 1px solid #d1d1d1; border-bottom-color: #605e5c; border-radius: 5px; background: #fff; display: flex; align-items: center; gap: 10px; padding: 2px 0 0 18px; font-size: 19px; color: #707070; }
.tree { position: relative; margin-top: 15px; }
.row { height: 36px; display: flex; align-items: center; padding-left: 66px; white-space: nowrap; }
.row.top { padding-left: 20px; fill: none; stroke: none; }
.row.top > span:last-child { margin-left: 8px; }
.ch { margin-right: 6px; }
.row.exp { padding-left: 46px; }
.arrow { margin-right: 10px; }
.cb { width: 18px; height: 18px; border: 1px solid #797775; border-radius: 3px; flex: none; }
.cb.on { background: #437866; }
.row b { width: 27px; margin-left: 12px; flex: none; }
.badged { position: relative; }
.badge { position: absolute; left: 9px; top: 9px; }
.selected { background: linear-gradient(#dfdedd, #dfdedd) 8px 0 / 243px 36px no-repeat; position: relative; }
.selected::before { content: ""; position: absolute; left: 8px; top: 0; width: 4px; height: 36px; border-left: 3px solid #437866; border-radius: 3px 0 0 3px; }
.scroll { position: absolute; left: 252px; top: -3px; width: 10px; height: 558px; background: #8a8886; }
```
